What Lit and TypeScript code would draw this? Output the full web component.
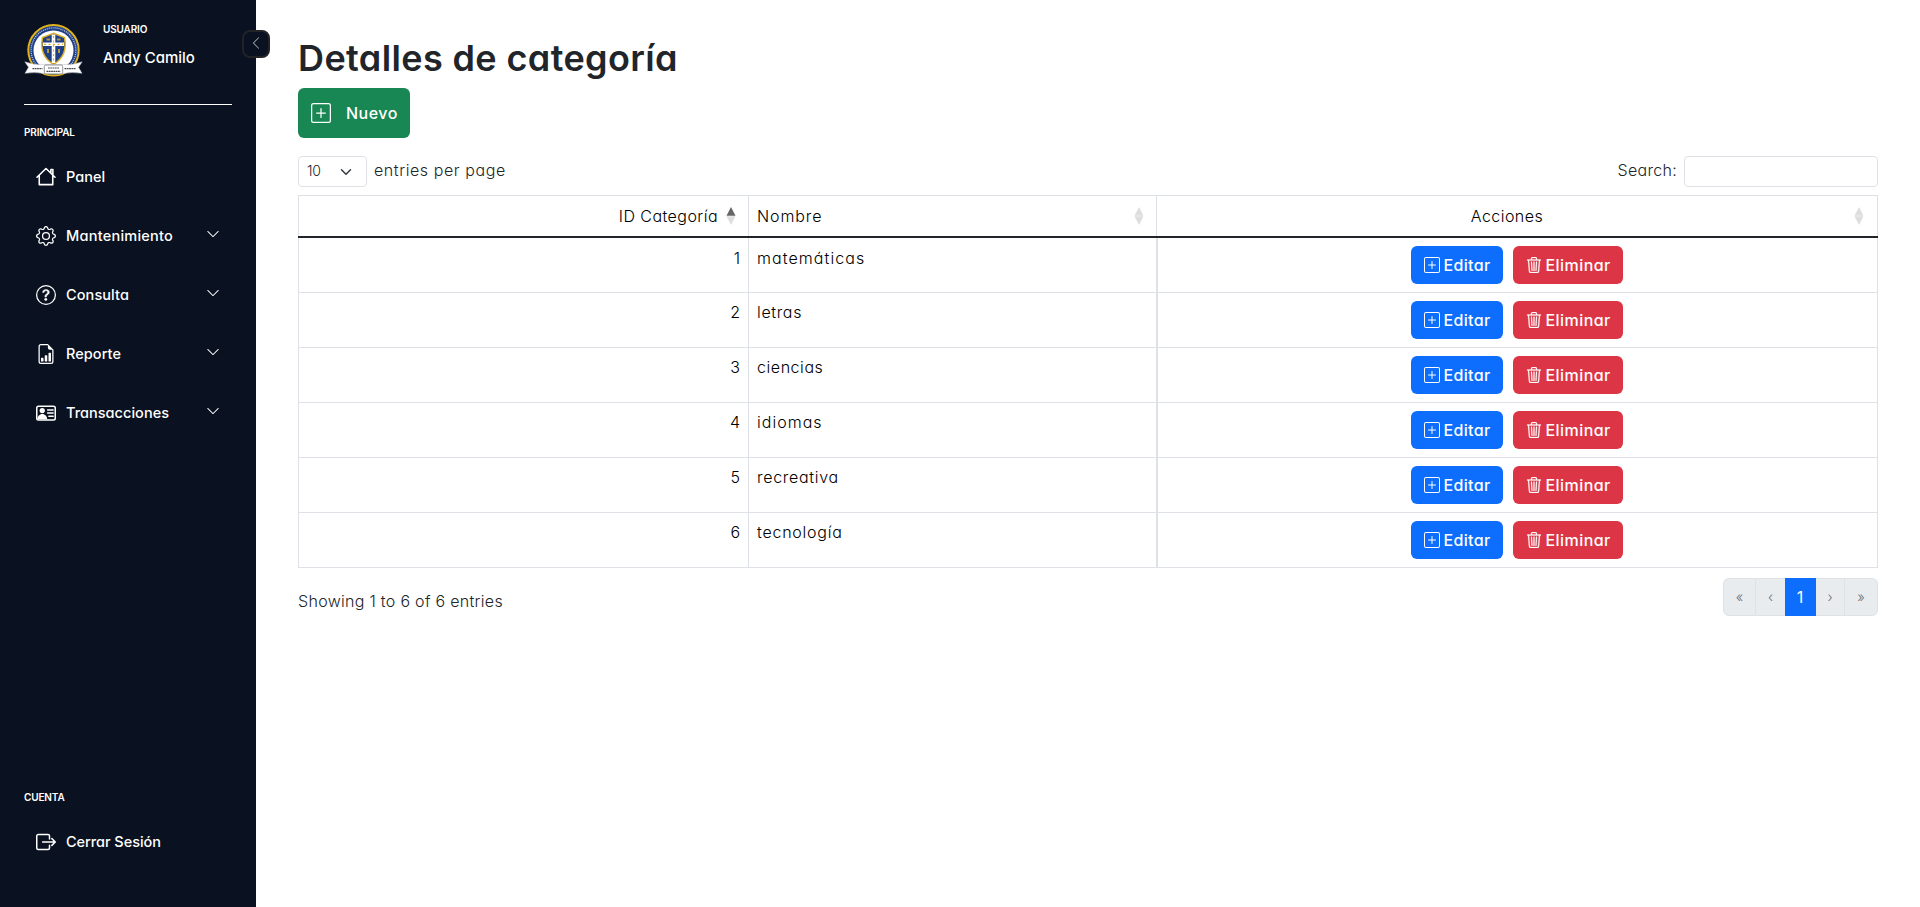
import { LitElement, html, css, svg } from "lit";
import { customElement } from "lit/decorators.js";
import { styleMap } from "lit/directives/style-map.js";

const icon = (body: unknown, cls: string, box = "0 0 16 16") =>
  html`<svg class=${cls} viewBox=${box} fill="currentColor" aria-hidden="true">${body}</svg>`;

const house = svg`<path d="M.8 8.2 8 1.2l7.2 7M11.9 4.9V2h1.6v4.4M2.6 6.9v7.2h10.8V6.9" fill="none" stroke="currentColor" stroke-width="1.25" stroke-linecap="round" stroke-linejoin="round"/>`;
const gear = svg`<path d="M8 4.754a3.246 3.246 0 1 0 0 6.492 3.246 3.246 0 0 0 0-6.492zM5.754 8a2.246 2.246 0 1 1 4.492 0 2.246 2.246 0 0 1-4.492 0z"/><path d="M9.796 1.343c-.527-1.79-3.065-1.79-3.592 0l-.094.319a.873.873 0 0 1-1.255.52l-.292-.16c-1.64-.892-3.433.902-2.54 2.541l.159.292a.873.873 0 0 1-.52 1.255l-.319.094c-1.79.527-1.79 3.065 0 3.592l.319.094a.873.873 0 0 1 .52 1.255l-.16.292c-.892 1.64.901 3.434 2.541 2.54l.292-.159a.873.873 0 0 1 1.255.52l.094.319c.527 1.79 3.065 1.79 3.592 0l.094-.319a.873.873 0 0 1 1.255-.52l.292.16c1.64.893 3.434-.902 2.54-2.541l-.159-.292a.873.873 0 0 1 .52-1.255l.319-.094c1.79-.527 1.79-3.065 0-3.592l-.319-.094a.873.873 0 0 1-.52-1.255l.16-.292c.893-1.64-.902-3.433-2.541-2.54l-.292.159a.873.873 0 0 1-1.255-.52l-.094-.319zm-2.633.283c.246-.835 1.428-.835 1.674 0l.094.319a1.873 1.873 0 0 0 2.693 1.115l.291-.16c.764-.415 1.6.42 1.184 1.185l-.159.292a1.873 1.873 0 0 0 1.116 2.692l.318.094c.835.246.835 1.428 0 1.674l-.319.094a1.873 1.873 0 0 0-1.115 2.693l.16.291c.415.764-.42 1.6-1.185 1.184l-.291-.159a1.873 1.873 0 0 0-2.693 1.116l-.094.318c-.246.835-1.428.835-1.674 0l-.094-.319a1.873 1.873 0 0 0-2.692-1.115l-.292.16c-.764.415-1.6-.42-1.184-1.185l.159-.291A1.873 1.873 0 0 0 1.945 8.93l-.319-.094c-.835-.246-.835-1.428 0-1.674l.319-.094A1.873 1.873 0 0 0 3.06 4.377l-.16-.292c-.415-.764.42-1.6 1.185-1.184l.292.159a1.873 1.873 0 0 0 2.692-1.115l.094-.319z"/>`;
const question = svg`<path d="M8 15A7 7 0 1 1 8 1a7 7 0 0 1 0 14zm0 1A8 8 0 1 0 8 0a8 8 0 0 0 0 16z"/><path stroke="currentColor" stroke-width=".35" d="M5.255 5.786a.237.237 0 0 0 .241.247h.825c.138 0 .248-.113.266-.25.09-.656.54-1.134 1.342-1.134.686 0 1.314.343 1.314 1.168 0 .635-.374.927-.965 1.371-.673.489-1.206 1.06-1.168 1.987l.003.217a.25.25 0 0 0 .25.246h.811a.25.25 0 0 0 .25-.25v-.105c0-.718.273-.927 1.01-1.486.609-.463 1.244-.977 1.244-2.056 0-1.511-1.276-2.241-2.673-2.241-1.267 0-2.655.59-2.75 2.286zm1.557 5.763c0 .533.425.927 1.01.927.609 0 1.028-.394 1.028-.927 0-.552-.42-.94-1.029-.94-.584 0-1.009.388-1.009.94z"/>`;
const report = svg`<path d="M10 13.5a.5.5 0 0 0 .5.5h1a.5.5 0 0 0 .5-.5v-6a.5.5 0 0 0-.5-.5h-1a.5.5 0 0 0-.5.5v6zm-2.5.5a.5.5 0 0 1-.5-.5v-4a.5.5 0 0 1 .5-.5h1a.5.5 0 0 1 .5.5v4a.5.5 0 0 1-.5.5h-1zm-3 0a.5.5 0 0 1-.5-.5v-2a.5.5 0 0 1 .5-.5h1a.5.5 0 0 1 .5.5v2a.5.5 0 0 1-.5.5h-1z"/><path d="M14 14V4.5L9.5 0H4a2 2 0 0 0-2 2v12a2 2 0 0 0 2 2h8a2 2 0 0 0 2-2zM9.5 3A1.5 1.5 0 0 0 11 4.5h2V14a1 1 0 0 1-1 1H4a1 1 0 0 1-1-1V2a1 1 0 0 1 1-1h5.5v2z"/>`;
const vcard = svg`<rect x=".6" y="2.5" width="14.8" height="11" rx="1.4" fill="none" stroke="currentColor" stroke-width="1.2"/><circle cx="5" cy="6" r="2.1"/><path d="M1.1 13c.1-2.3 1.8-4.2 3.900-4.200s3.900 1.900 3.960 4.200z"/><path d="M9.300 5.500h4.400M9.300 8h4.400M10.300 10.500h3.400" fill="none" stroke="currentColor" stroke-width="1.200" stroke-linecap="round"/>`;
const logout = svg`<path d="M10.8 5.5V3.2a1.2 1.2 0 0 0-1.2-1.2H1.8A1.2 1.2 0 0 0 .6 3.2v9.6A1.2 1.2 0 0 0 1.8 14h7.8a1.2 1.2 0 0 0 1.2-1.2v-2.300M5.300 8h10M12.700 5.300 15.400 8l-2.700 2.700" fill="none" stroke="currentColor" stroke-width="1.200" stroke-linecap="round" stroke-linejoin="round"/>`;
const chevron = svg`<path d="M1.646 4.646a.5.5 0 0 1 .708 0L8 10.293l5.646-5.647a.5.5 0 0 1 .708.708l-6 6a.5.5 0 0 1-.708 0l-6-6a.5.5 0 0 1 0-.708z"/>`;
const chevronLeft = svg`<path d="M11.354 1.646a.5.5 0 0 1 0 .708L5.707 8l5.647 5.646a.5.5 0 0 1-.708.708l-6-6a.5.5 0 0 1 0-.708l6-6a.5.5 0 0 1 .708 0z"/>`;
const plusSquare = svg`<path d="M14 1a1 1 0 0 1 1 1v12a1 1 0 0 1-1 1H2a1 1 0 0 1-1-1V2a1 1 0 0 1 1-1h12zM2 0a2 2 0 0 0-2 2v12a2 2 0 0 0 2 2h12a2 2 0 0 0 2-2V2a2 2 0 0 0-2-2H2z"/><path d="M8 4a.5.5 0 0 1 .5.5v3h3a.5.5 0 0 1 0 1h-3v3a.5.5 0 0 1-1 0v-3h-3a.5.5 0 0 1 0-1h3v-3A.5.5 0 0 1 8 4z"/>`;
const trash = svg`<path d="M6.5 1h3a.5.5 0 0 1 .5.5v1H6v-1a.5.5 0 0 1 .5-.5M11 2.5v-1A1.5 1.5 0 0 0 9.5 0h-3A1.5 1.5 0 0 0 5 1.5v1H1.5a.5.5 0 0 0 0 1h.538l.853 10.660A2 2 0 0 0 4.885 16h6.230a2 2 0 0 0 1.994-1.840l.853-10.660h.538a.5.5 0 0 0 0-1zm1.958 1-.846 10.580a1 1 0 0 1-.997.920h-6.230a1 1 0 0 1-.997-.920L3.042 3.500zm-7.487 1a.5.5 0 0 1 .528.470l.5 8.500a.5.5 0 0 1-.998.060L5 5.030a.5.5 0 0 1 .470-.530zm5.058 0a.5.5 0 0 1 .470.530l-.5 8.500a.5.5 0 1 1-.998-.060l.5-8.500a.5.5 0 0 1 .528-.470M8 4.500a.5.5 0 0 1 .5.5v8.500a.5.5 0 0 1-1 0V5a.5.5 0 0 1 .5-.5" stroke="currentColor" stroke-width=".25"/>`;

const menu: { label: string; glyph: unknown; tracking: number; open: boolean }[] = [
  { label: "Panel", glyph: house, tracking: 0.05, open: false },
  { label: "Mantenimiento", glyph: gear, tracking: 0.24, open: true },
  { label: "Consulta", glyph: question, tracking: 0.09, open: true },
  { label: "Reporte", glyph: report, tracking: 0.06, open: true },
  { label: "Transacciones", glyph: vcard, tracking: 0.03, open: true },
];

const rows: { id: number; name: string; tracking: number }[] = [
  { id: 1, name: "matemáticas", tracking: 1.08 },
  { id: 2, name: "letras", tracking: 0.65 },
  { id: 3, name: "ciencias", tracking: 0.56 },
  { id: 4, name: "idiomas", tracking: 1.02 },
  { id: 5, name: "recreativa", tracking: 0.7 },
  { id: 6, name: "tecnología", tracking: 0.77 },
];

const ls = (px: number) => styleMap({ letterSpacing: `${px}px` });

@customElement("side-bar")
class SideBar extends LitElement {
  static styles = css`
    :host { display: flex; flex-direction: column; box-sizing: border-box; width: 256px; height: 907px; padding: 24px 24px 0; background: #0a1120; color: #fff; position: relative; font-weight: 500; }
    .toggle { position: absolute; left: 242px; top: 30px; box-sizing: border-box; width: 28px; height: 28px; border: 2px solid #212327; border-radius: 8px; background: #0a1120; display: grid; place-items: center; color: #a9abb0; }
    .arrow { width: 14px; height: 14px; display: block; margin-top: -2px; }
    .head { display: flex; gap: 20px; height: 80px; border-bottom: 1px solid #fff; }
    .logo { width: 59px; height: 53px; display: block; flex: none; }
    .who { display: flex; flex-direction: column; margin-top: -1px; }
    .cap { font-size: 10px; font-weight: 600; line-height: 12px; letter-spacing: -0.14px; }
    .name { font-size: 15px; line-height: 20px; margin-top: 13px; }
    .section { margin-top: 21px; }
    .list { margin-top: 9px; }
    .item { display: flex; align-items: center; height: 59px; padding-left: 12px; font-size: 14.5px; }
    .ico { width: 20px; height: 20px; margin-right: 10px; flex: none; }
    .chev { width: 14px; height: 14px; margin: -3px 12px 0 auto; }
    .account { margin-top: auto; height: 116px; }
    .exit { letter-spacing: -0.05px; }
  `;
  render() {
    return html`
      <div class="toggle">${icon(chevronLeft, "arrow")}</div>
      <div class="head">
        <svg class="logo" viewBox="0 0 59 53">
          <circle cx="29.5" cy="26.3" r="25.2" fill="#1f3f86" stroke="#e0b21c" stroke-width="2"/>
          <circle cx="29.5" cy="26.3" r="22.4" fill="none" stroke="#c4cde0" stroke-width="1.3" stroke-dasharray="1 1"/>
          <circle cx="29.5" cy="26.5" r="20" fill="#fff"/>
          <path d="M29.5 9.3 40.500 13.500C42.800 26 39.500 34 29.500 40.500 19.500 34 16.200 26 18.500 13.500Z" fill="#1f3f86" stroke="#d8ae2a" stroke-width="1.500"/>
          <path d="M29.500 10.500V39M19 20.300H40" stroke="#fff" stroke-width="3.600"/>
          <path d="M22.500 15.500h3.600M32.900 15.500h3.600M24 25v4M35 25v4" stroke="#d8ae2a" stroke-width="2" opacity=".8"/>
          <path d="M29.500 12v25M20 20.300h19" stroke="#d8ae2a" stroke-width="1.200" stroke-dasharray="2 2.500"/>
          <path d="M.8 37.800Q10 41.300 19.500 40.500h20Q49 41.300 58.200 37.800L54.500 43.300 58 49.300Q48 47.800 39.500 49.500h-20Q11 47.800 1 49.300L4.500 43.300Z" fill="#fff" stroke="#b9bbc1" stroke-width=".5"/>
          <rect x="20.300" y="41" width="18.400" height="9" rx="1.500" fill="#fff" stroke="#77797f" stroke-width=".8"/>
          <path d="M8.500 44.700h10M40.500 44.700h11M24 44h11M22.500 47.300h14" stroke="#4a4c52" stroke-width="1.200" stroke-dasharray="1.800 .5"/>
        </svg>
        <div class="who">
          <span class="cap">USUARIO</span>
          <span class="name">Andy Camilo</span>
        </div>
      </div>
      <div class="cap section">PRINCIPAL</div>
      <div class="list">
        ${menu.map(
          (m) => html`<div class="item">
            ${icon(m.glyph, "ico")}<span style=${ls(m.tracking)}>${m.label}</span>
            ${m.open ? icon(chevron, "chev") : null}
          </div>`
        )}
      </div>
      <div class="account">
        <div class="cap">CUENTA</div>
        <div class="list"><div class="item">${icon(logout, "ico")}<span class="exit">Cerrar Sesión</span></div></div>
      </div>
    `;
  }
}

@customElement("category-table")
class CategoryTable extends LitElement {
  static styles = css`
    :host { display: block; color: #000; font-weight: 360; }
    .grid { box-sizing: border-box; border: 1px solid #dee2e6; }
    .row { display: grid; grid-template-columns: 450px 408px 1fr; height: 55px; box-sizing: border-box; border-top: 1px solid #dee2e6; line-height: 24px; }
    .row.top { height: 42px; border-top: 0; border-bottom: 2px solid #212529; margin: 0 -1px; grid-template-columns: 451px 408px 1fr; }
    .row.top + .row { border-top: 0; height: 54px; }
    .c { padding: 7px 8px 0; border-right: 1px solid #dee2e6; box-sizing: border-box; }
    .row.top + .row .c { padding-top: 8px; }
    .row.top .c { display: flex; align-items: center; padding: 0 8px 1px; }
    .row.top .c:first-child { border-left: 1px solid #dee2e6; }
    .c.id { text-align: right; justify-content: flex-end; }
    .c.act { border-right: 0; text-align: center; }
    .row:not(.top) .act { border-left: 1px solid #dee2e6; display: flex; justify-content: center; gap: 10px; padding: 8px 2px 0 0; }
    .row.top .c.act { border-right: 1px solid #dee2e6; padding-left: 3px; padding-right: 13px; }
    .row.top .act span { flex: 1; }
    .sort { width: 10px; height: 18px; flex: none; }
    .id .sort { margin: 0 4px 0 8px; }
    .name .sort { margin-left: auto; margin-right: 4px; }
    .dim { fill: #dedede; }
    .on { fill: #666; }
    .t1 { letter-spacing: 0.45px; }
    .t2 { letter-spacing: 0.9px; }
    .btn { display: flex; align-items: center; height: 38px; border-radius: 6px; color: #fff; font-weight: 460; box-sizing: border-box; padding: 0 0 1px 13px; letter-spacing: 0.35px; }
    .edit { width: 92px; background: #0d6efd; }
    .del { width: 110px; background: #dc3545; letter-spacing: 0.45px; }
    .bi { width: 16px; height: 16px; margin-right: 4px; flex: none; }
  `;
  private sort(active = false) {
    return html`<svg class="sort" viewBox="0 0 10 18"><path class=${active ? "on" : "dim"} d="M5 0 9.5 8.700H.5Z"/><path class="dim" d="M5 18 9.500 9.300H.5Z"/></svg>`;
  }
  render() {
    return html`<div class="grid">
      <div class="row top">
        <div class="c id"><span class="t1">ID Categoría</span>${this.sort(true)}</div>
        <div class="c name"><span class="t2">Nombre</span>${this.sort()}</div>
        <div class="c act"><span class="t1">Acciones</span>${this.sort()}</div>
      </div>
      ${rows.map(
        (r) => html`<div class="row">
          <div class="c id">${r.id}</div>
          <div class="c"><span style=${ls(r.tracking)}>${r.name}</span></div>
          <div class="c act">
            <div class="btn edit">${icon(plusSquare, "bi")}Editar</div>
            <div class="btn del">${icon(trash, "bi")}Eliminar</div>
          </div>
        </div>`
      )}
    </div>`;
  }
}

@customElement("app-root")
class AppRoot extends LitElement {
  static styles = css`
    :host { display: flex; width: 1920px; height: 907px; overflow: hidden; background: #fff; color: #212529; font: 360 16px/24px Inter, "Open Sans", sans-serif; font-feature-settings: "cv11"; }
    side-bar { flex: none; }
    main { flex: 1; box-sizing: border-box; padding: 36px 42px 0; }
    h1 { margin: 0; font-size: 36px; line-height: 44px; font-weight: 600; letter-spacing: 0.38px; }
    .new { display: flex; align-items: center; box-sizing: border-box; margin-top: 8px; width: 112px; height: 50px; padding: 0 0 1px 13px; gap: 15px; border-radius: 6px; background: #198754; color: #fff; font-weight: 470; letter-spacing: 0.5px; }
    .plus { width: 20px; height: 20px; }
    .tools { display: flex; justify-content: space-between; margin: 18px 0 8px; height: 31px; }
    .tools > div { display: flex; align-items: center; gap: 7px; }
    .select { display: flex; align-items: center; justify-content: space-between; box-sizing: border-box; width: 69px; height: 31px; padding: 0 14px 1px 8px; border: 1px solid #dee2e6; border-radius: 4px; font-size: 14px; letter-spacing: -0.3px; }
    .caret { width: 12px; height: 12px; margin-top: 1px; }
    .per { letter-spacing: 0.58px; padding-bottom: 3px; }
    .find { letter-spacing: 0.3px; padding-bottom: 3px; }
    .input { box-sizing: border-box; width: 194px; height: 31px; border: 1px solid #dee2e6; border-radius: 4px; }
    .foot { display: flex; justify-content: space-between; margin-top: 10px; }
    .info { padding-top: 11px; letter-spacing: 0.3px; }
    .pages { display: flex; height: 38px; color: #6b7278; font-size: 14px; }
    .p { box-sizing: border-box; display: grid; place-items: center; background: #e9ecef; border: 1px solid #dee2e6; border-left-width: 0; width: 29px; padding-bottom: 1px; }
    .first { width: 33px; border-left-width: 1px; border-radius: 6px 0 0 6px; }
    .last { width: 33px; border-radius: 0 6px 6px 0; }
    .cur { width: 31px; background: #0d6efd; border-color: #0d6efd; color: #fff; font-size: 16px; font-weight: 400; }
    .prev { border-right-width: 0; }
  `;
  render() {
    return html`
      <side-bar></side-bar>
      <main>
        <h1>Detalles de categoría</h1>
        <div class="new">${icon(plusSquare, "plus")}<span>Nuevo</span></div>
        <div class="tools">
          <div>
            <div class="select">10<svg class="caret" viewBox="0 0 16 16"><path fill="none" stroke="#343a40" stroke-linecap="round" stroke-linejoin="round" stroke-width="2" d="m2 5 6 6 6-6"/></svg></div>
            <span class="per">entries per page</span>
          </div>
          <div><span class="find">Search:</span><div class="input"></div></div>
        </div>
        <category-table></category-table>
        <div class="foot">
          <div class="info">Showing 1 to 6 of 6 entries</div>
          <div class="pages">
            <div class="p first">«</div>
            <div class="p prev">‹</div>
            <div class="p cur">1</div>
            <div class="p">›</div>
            <div class="p last">»</div>
          </div>
        </div>
      </main>
    `;
  }
}
